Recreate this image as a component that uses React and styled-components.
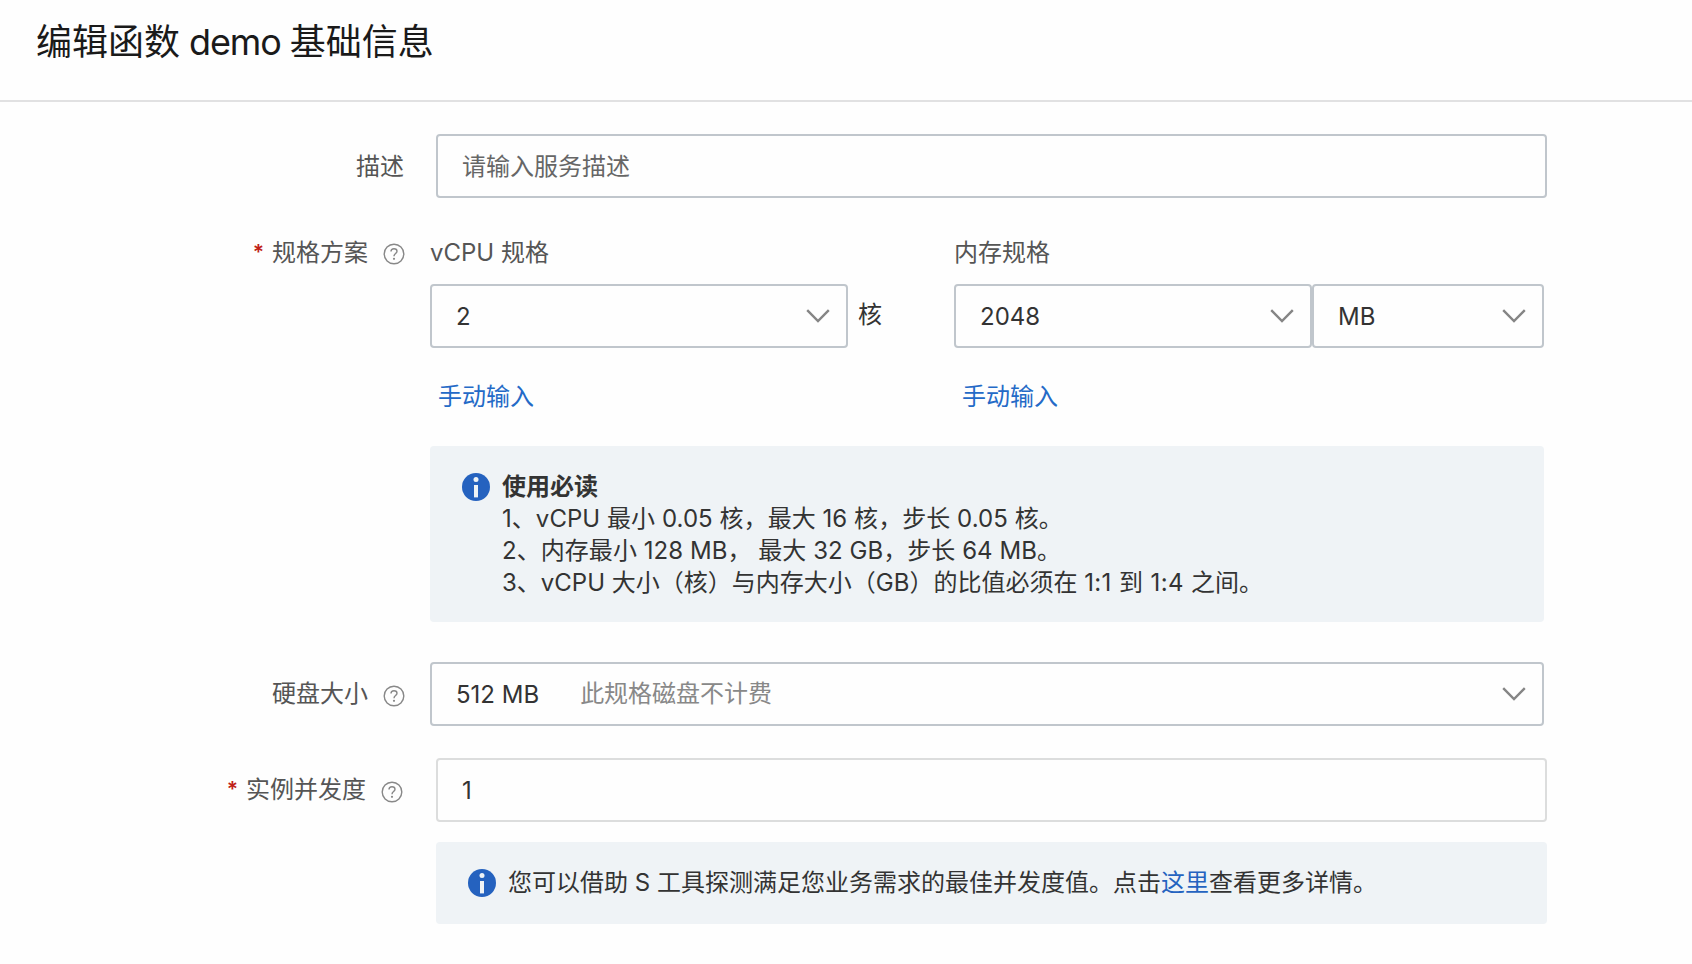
import styled, { createGlobalStyle } from 'styled-components';

const GlobalStyle = createGlobalStyle`
  * {
    box-sizing: border-box;
  }
  body {
    margin: 0;
    background-color: #fefefe;
    color: #333;
    font-family: Inter, "Noto Sans CJK SC", sans-serif;
    font-size: 24px;
    line-height: 32px;
  }
`;

const Page = styled.div`
  height: 964px;
  overflow: hidden;
`;

const Header = styled.header`
  height: 102px;
  padding: 17px 36px 0;
  border-bottom: 2px solid #e1e1e2;
`;

const Title = styled.h1`
  margin: 0;
  color: #1a1a1a;
  font-size: 36px;
  font-weight: 400;
  line-height: 50px;
  white-space: pre;
`;

const FunctionName = styled.span`
  letter-spacing: -1.1px;
`;

const Form = styled.form`
  padding-top: 32px;
`;

const Row = styled.div`
  display: flex;
  margin-bottom: ${(props) => props.$bottom || 0}px;
`;

const Label = styled.div`
  display: flex;
  justify-content: flex-end;
  align-items: center;
  flex: none;
  width: ${(props) => (props.$wide ? 436 : 430)}px;
  height: ${(props) => props.$height || 64}px;
  padding-top: ${(props) => props.$top || 0}px;
  padding-right: ${(props) => props.$right || 25}px;
  color: #555;
  white-space: nowrap;
`;

const Star = styled.span`
  margin-right: 8px;
  color: #c01f17;
  font-size: 21px;
  font-weight: 600;
`;

const HelpSvg = styled.svg`
  flex: none;
  width: 22px;
  height: 22px;
  margin: 3px 0 0 15px;
`;

const Field = styled.div`
  width: ${(props) => props.$width}px;
`;

const Input = styled.input`
  display: block;
  width: 100%;
  height: 64px;
  padding: 0 24px;
  border: 2px solid ${(props) => props.$border || '#c0c6cc'};
  border-radius: 4px;
  background-color: #fefefe;
  color: #333;
  font: inherit;
  outline: none;
  &::placeholder {
    color: #666;
    opacity: 1;
  }
`;

const SelectBox = styled.div`
  display: flex;
  align-items: center;
  flex: none;
  width: ${(props) => props.$width}px;
  height: 64px;
  padding: 0 16px 0 24px;
  border: 2px solid #c0c6cc;
  border-radius: 4px;
  white-space: nowrap;
`;

const Value = styled.span`
  padding-top: 1px;
`;

const Hint = styled.span`
  margin-left: 41px;
  color: #888;
`;

const ArrowSvg = styled.svg`
  width: 24px;
  height: 14px;
  margin-left: auto;
`;

const Specs = styled.div`
  display: flex;
`;

const Spec = styled.div`
  width: ${(props) => props.$width}px;
`;

const SpecName = styled.div`
  height: 62px;
  padding-top: 15px;
  color: #555;
`;

const Controls = styled.div`
  display: flex;
`;

const Unit = styled.span`
  padding: 15px 0 0 10px;
`;

const ManualLink = styled.a`
  display: inline-block;
  margin: 33px 0 33px 8px;
  color: #246ac7;
`;

const Notice = styled.div`
  display: flex;
  padding: ${(props) => props.$pad || '25px 32px 23px'};
  border-radius: 4px;
  background-color: #eff3f6;
  white-space: nowrap;
`;

const InfoSvg = styled.svg`
  flex: none;
  width: 28px;
  height: 28px;
  margin: 2px 12px 0 0;
`;

const NoticeTitle = styled.div`
  font-weight: 700;
`;

const NoticeLine = styled.div`
  letter-spacing: ${(props) => props.$track || 0}px;
`;

const Ratio = styled.span`
  letter-spacing: 0.4px;
`;

const Link = styled.a`
  color: #2563c0;
`;

function HelpIcon() {
  return (
    <HelpSvg viewBox="0 0 22 22" fill="none" stroke="#888" strokeWidth="1.4">
      <circle cx="11" cy="11" r="9.8" />
      <path d="M8 8.6C8 6.7 9.2 5.7 11 5.7s3 1 3 2.6c0 2.2-3 2.4-3 4.9" />
      <circle cx="11" cy="15.8" r="1.1" fill="#888" stroke="none" />
    </HelpSvg>
  );
}

function InfoIcon() {
  return (
    <InfoSvg viewBox="0 0 28 28">
      <circle cx="14" cy="14" r="14" fill="#2562bf" />
      <circle cx="14" cy="6.5" r="2.5" fill="#eff3f6" />
      <path d="M12 12h4v12.4h-4z" fill="#eff3f6" />
    </InfoSvg>
  );
}

function Select({ width, value, hint }) {
  return (
    <SelectBox $width={width}>
      <Value>{value}</Value>
      {hint && <Hint>{hint}</Hint>}
      <ArrowSvg viewBox="0 0 24 14" fill="none" stroke="#858585" strokeWidth="2.4">
        <path d="M1.2 1.2L12 12 22.8 1.2" />
      </ArrowSvg>
    </SelectBox>
  );
}

export default function App() {
  return (
    <>
      <GlobalStyle />
      <Page>
        <Header>
          <Title>编辑函数<FunctionName> demo </FunctionName>基础信息</Title>
        </Header>
        <Form>
          <Row $bottom={24}>
            <Label $wide $top={2} $right={32}>描述</Label>
            <Field $width={1111}>
              <Input placeholder="请输入服务描述" />
            </Field>
          </Row>

          <Row $bottom={40}>
            <Label $height={61}>
              <Star>*</Star>规格方案<HelpIcon />
            </Label>
            <Field $width={1114}>
              <Specs>
                <Spec $width={524}>
                  <SpecName>vCPU 规格</SpecName>
                  <Controls>
                    <Select width={418} value="2" />
                    <Unit>核</Unit>
                  </Controls>
                  <ManualLink>手动输入</ManualLink>
                </Spec>
                <Spec $width={590}>
                  <SpecName>内存规格</SpecName>
                  <Controls>
                    <Select width={358} value="2048" />
                    <Select width={232} value="MB" />
                  </Controls>
                  <ManualLink>手动输入</ManualLink>
                </Spec>
              </Specs>
              <Notice>
                <InfoIcon />
                <div>
                  <NoticeTitle>使用必读</NoticeTitle>
                  <NoticeLine $track={0.05}>1、vCPU 最小 0.05 核，最大 16 核，步长 0.05 核。</NoticeLine>
                  <NoticeLine $track={0.05}>2、内存最小 128 MB， 最大 32 GB，步长 64 MB。</NoticeLine>
                  <NoticeLine>
                    3、vCPU 大小（核）与内存大小（GB）的比值必须在 <Ratio>1:1 到 1:4 </Ratio>之间。
                  </NoticeLine>
                </div>
              </Notice>
            </Field>
          </Row>

          <Row $bottom={32}>
            <Label>硬盘大小<HelpIcon /></Label>
            <Select width={1114} value="512 MB" hint="此规格磁盘不计费" />
          </Row>

          <Row $bottom={20}>
            <Label $wide $right={33}>
              <Star>*</Star>实例并发度<HelpIcon />
            </Label>
            <Field $width={1111}>
              <Input defaultValue="1" $border="#dcdddd" />
            </Field>
          </Row>

          <Row>
            <Label $wide />
            <Field $width={1111}>
              <Notice $pad="25px 32px">
                <InfoIcon />
                <div>
                  您可以借助 S 工具探测满足您业务需求的最佳并发度值。点击<Link>这里</Link>查看更多详情。
                </div>
              </Notice>
            </Field>
          </Row>
        </Form>
      </Page>
    </>
  );
}
